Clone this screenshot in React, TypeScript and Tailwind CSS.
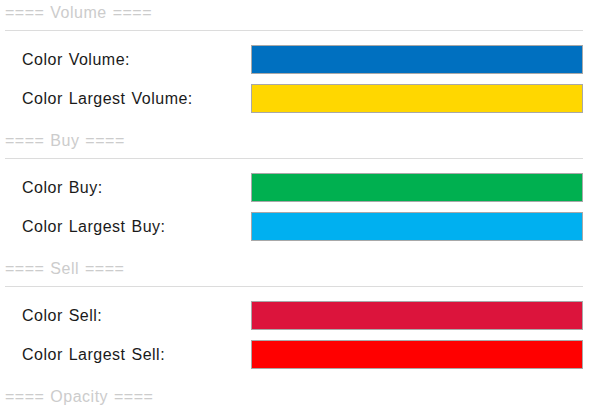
const sections: { title: string; rows: { label: string; color: string }[] }[] = [
  {
    title: "Volume",
    rows: [
      { label: "Color Volume:", color: "bg-[#0070c0]" },
      { label: "Color Largest Volume:", color: "bg-[#ffd700]" },
    ],
  },
  {
    title: "Buy",
    rows: [
      { label: "Color Buy:", color: "bg-[#00b050]" },
      { label: "Color Largest Buy:", color: "bg-[#00b0f0]" },
    ],
  },
  {
    title: "Sell",
    rows: [
      { label: "Color Sell:", color: "bg-[#dc143c]" },
      { label: "Color Largest Sell:", color: "bg-[#ff0000]" },
    ],
  },
  { title: "Opacity", rows: [] },
];

function App() {
  return (
    <div className="h-[411px] w-[600px] overflow-hidden bg-white pl-[5px] pr-[17px] font-['Liberation_Sans',Arial,sans-serif] text-[16px] tracking-[0.5px] [word-spacing:1px]">
      {sections.map((s) => (
        <div key={s.title} className="pb-[15px]">
          {/* Section header */}
          <div className="h-[31px] border-b border-[#dcdcdc] leading-[26px] text-[#cccccc]">
            ==== {s.title} ====
          </div>
          {s.rows.length > 0 && (
            <div className="mt-[14px] flex flex-col gap-[10px]">
              {s.rows.map((r) => (
                <div key={r.label} className="flex items-center">
                  <div className="w-[246px] pl-[17px] text-[#1a1a1a]">{r.label}</div>
                  <div className={`h-[29px] flex-1 border border-[#a8a8a8] ${r.color}`} />
                </div>
              ))}
            </div>
          )}
        </div>
      ))}
    </div>
  );
}

export default App;
